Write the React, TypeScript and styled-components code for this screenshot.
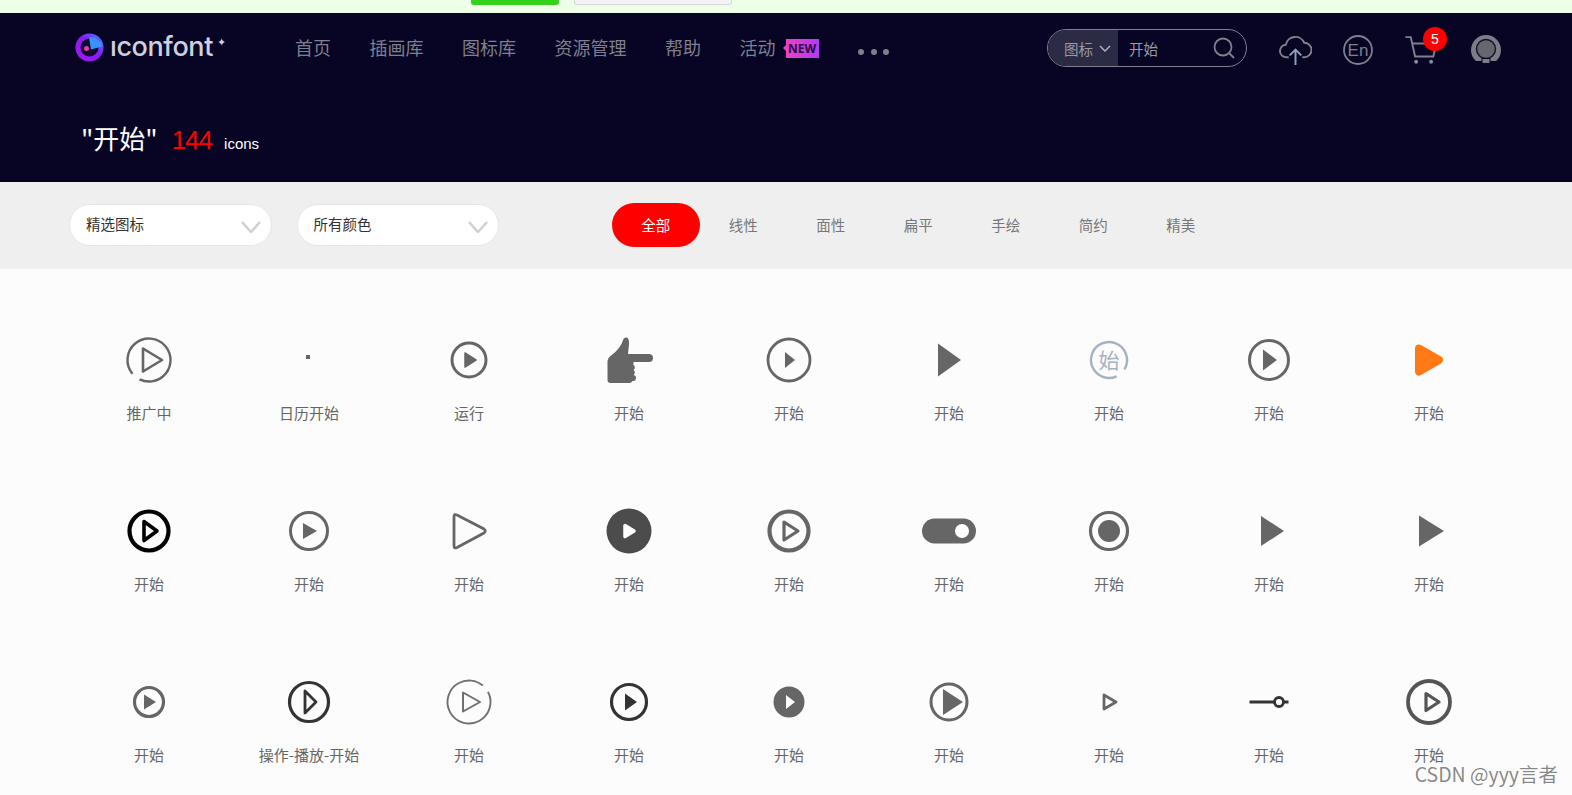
import React from 'react';
import styled, { createGlobalStyle } from 'styled-components';

const GlobalStyle = createGlobalStyle`
  html, body {
    margin: 0;
    padding: 0;
    height: 795px;
    overflow: hidden;
    background: #fcfcfc;
    font-family: "Noto Sans CJK SC", "Liberation Sans", sans-serif;
  }
`;

const Page = styled.div`
  position: relative;
  width: 1572px;
  height: 795px;
  overflow: hidden;
`;

const TopStrip = styled.div`
  height: 13px;
  background: #eeffe8;
  display: flex;
  align-items: flex-start;
  gap: 15px;
  padding-left: 471px;
`;

const GreenStub = styled.div`
  width: 88px;
  height: 5px;
  background: #34d11c;
  border-radius: 0 0 3px 3px;
`;

const GreyStub = styled.div`
  width: 156px;
  height: 4px;
  background: #f3f3f3;
  border: 1px solid #d8d8d8;
  border-top: none;
  border-radius: 0 0 3px 3px;
`;

const Header = styled.header`
  height: 169px;
  background: #080524;
`;

const NavRow = styled.div`
  height: 74px;
  display: flex;
  align-items: center;
  padding-left: 75px;
`;

const LogoBox = styled.div`
  display: flex;
  flex: none;
  align-items: center;
  width: 220px;
  height: 40px;
  margin-top: -6px;
`;

const LogoWord = styled.span`
  font-family: Inter, "Liberation Sans", sans-serif;
  font-size: 27px;
  font-weight: 500;
  line-height: 30px;
  letter-spacing: -0.4px;
  color: #cfcfdf;
  margin-left: 6px;
`;

const LogoStar = styled.span`
  font-size: 11px;
  line-height: 11px;
  color: #cfcfdf;
  margin: -12px 0 0 4px;
`;

const Nav = styled.nav`
  display: flex;
  flex: none;
  align-items: center;
  gap: 38.5px;
  width: 752px;
  margin-top: -6px;
`;

const NavItem = styled.a`
  font-size: 18px;
  line-height: 24px;
  color: #7f7f8d;
  display: flex;
  align-items: center;
`;

const NewBadge = styled.span`
  position: relative;
  width: 33px;
  height: 19px;
  margin: 2px 0 0 10px;
  background: linear-gradient(90deg, #ee3fc4, #b13bf0);
  color: #2a0a4a;
  font: bold 12px/19px "Open Sans", "Liberation Sans", sans-serif;
  text-align: center;

  &::before {
    content: "";
    position: absolute;
    left: -3px;
    top: 6px;
    border: 3px solid transparent;
    border-left: none;
    border-right-color: #ee3fc4;
  }
`;

const Dots = styled.div`
  display: flex;
  gap: 6.5px;
  margin: 9px 0 0 1px;
`;

const Dot = styled.i`
  width: 6px;
  height: 6px;
  border-radius: 50%;
  background: #7f7f8d;
`;

const SearchBox = styled.div`
  flex: none;
  width: 198px;
  height: 36px;
  border: 1px solid #7f7f8d;
  border-radius: 19px;
  display: flex;
  align-items: center;
  overflow: hidden;
  margin-top: -4px;
`;

const SearchType = styled.div`
  width: 70px;
  height: 100%;
  background: #2c2b45;
  color: #9a9aa6;
  font-size: 14.5px;
  display: flex;
  align-items: center;
  gap: 6px;
  padding-left: 16px;
  box-sizing: border-box;
`;

const SearchText = styled.span`
  flex: 1;
  color: #9a9aa6;
  font-size: 14.5px;
  padding-left: 11px;
`;

const SearchIcon = styled.svg`
  margin-right: 11px;
`;

const Tools = styled.div`
  display: flex;
  align-items: center;
  margin-left: 32px;
  position: relative;
`;

const ToolIcon = styled.svg<{ $gap: number }>`
  display: block;
  flex: none;
  margin-right: ${(p) => p.$gap}px;
`;

const CartBadge = styled.span`
  position: absolute;
  left: 144px;
  top: -8px;
  width: 24px;
  height: 24px;
  border-radius: 50%;
  background: #f00;
  color: #fff;
  font: 14px/24px "Liberation Sans", sans-serif;
  text-align: center;
`;

const TitleRow = styled.div`
  display: flex;
  align-items: baseline;
  padding: 31px 0 0 81px;
  color: #fff;
`;

const TitleWord = styled.span`
  font-size: 26px;
  line-height: 40px;
`;

const TitleCount = styled.span`
  font-family: "Liberation Sans", sans-serif;
  font-size: 26px;
  color: #f00;
  margin-left: 14px;
  letter-spacing: -1px;
`;

const TitleUnit = styled.span`
  font-family: "Liberation Sans", sans-serif;
  font-size: 15px;
  margin-left: 12px;
`;

const FilterBar = styled.div`
  height: 87px;
  background: #efefef;
  display: flex;
  align-items: center;
  padding-left: 69px;
  border-bottom: 1px solid #f3f3f3;
  box-sizing: border-box;
`;

const Select = styled.div`
  width: 202.5px;
  height: 42px;
  box-sizing: border-box;
  border: 1px solid #e6e6e6;
  border-radius: 21px;
  background: #fff;
  color: #333;
  font-size: 14.5px;
  line-height: 37px;
  padding: 0 10px 0 16px;
  margin-right: 25px;
  display: flex;
  justify-content: space-between;
`;

const SelectArrow = styled.svg`
  margin-top: 16px;
`;

const Tabs = styled.div`
  display: flex;
  margin-left: 88px;
`;

const Tab = styled.div<{ $active?: boolean }>`
  width: 87.5px;
  height: 44px;
  border-radius: 22px;
  text-align: center;
  font-size: 14.5px;
  line-height: 44px;
  background: ${(p) => (p.$active ? '#f00' : 'transparent')};
  color: ${(p) => (p.$active ? '#fff' : '#777')};
`;

const IconGrid = styled.main`
  display: grid;
  grid-template-columns: repeat(9, 160px);
  row-gap: 78px;
  padding: 61px 0 0 69px;
`;

const Tile = styled.div`
  display: flex;
  flex-direction: column;
  align-items: center;
`;

const Glyph = styled.svg`
  display: block;
  width: 60px;
  height: 60px;
  overflow: visible;
`;

const TileName = styled.span`
  margin-top: 13px;
  font-size: 15px;
  line-height: 20px;
  color: #666;
  white-space: nowrap;
`;

const Watermark = styled.div`
  position: absolute;
  right: 14px;
  bottom: 8px;
  font-size: 19.5px;
  line-height: 26px;
  color: rgba(90, 90, 90, 0.72);
`;

const ring = (r: number, w: number, c = '#666', extra = {}) => (
  <circle cx="30" cy="30" r={r} fill="none" stroke={c} strokeWidth={w} {...extra} />
);

const gapRing = (r: number, w: number, c: string, from: number, gap: number) =>
  ring(r, w, c, {
    pathLength: 360,
    strokeDasharray: `${360 - gap} ${gap}`,
    transform: `rotate(${from} 30 30)`,
  });

// triangle pointing right; x1..x2 in local units, half height h
const tri = (x1: number, x2: number, h: number, c = '#666') => (
  <polygon points={`${x1},${30 - h} ${x2},30 ${x1},${30 + h}`} fill={c} />
);

const triLine = (x1: number, x2: number, h: number, w: number, c = '#666') => (
  <polygon
    points={`${x1},${30 - h} ${x2},30 ${x1},${30 + h}`}
    fill="none"
    stroke={c}
    strokeWidth={w}
    strokeLinejoin="round"
  />
);

const triRound = (x1: number, x2: number, h: number, w: number, c = '#666') => (
  <polygon
    points={`${x1},${30 - h} ${x2},30 ${x1},${30 + h}`}
    fill={c}
    stroke={c}
    strokeWidth={w}
    strokeLinejoin="round"
  />
);

const icons: { name: string; art: React.ReactNode }[] = [
  { name: '推广中', art: <>{gapRing(21.5, 2.4, '#666', 140, 24)}{triLine(24, 43, 11.5, 2.6)}</> },
  { name: '日历开始', art: <rect x="27" y="25" width="4" height="4" fill="#666" /> },
  { name: '运行', art: <>{ring(17, 3)}{triRound(26, 37, 7, 1.5)}</> },
  {
    name: '开始',
    art: (
      <path
        transform="translate(-1.500 0)"
        d="M26 9c3-3 6-1 5.500 5l-1 10h21a4 4 0 0 1 0 8H36v3a3 3 0 0 1 0 5a3 3 0 0 1 0 5a3 3 0 0 1-1 6q-1 2-3 2H13a3 3 0 0 1-3-3V31q0-3 3-5q10-7 13-17z"
        fill="#666"
      />
    ),
  },
  { name: '开始', art: <>{ring(21, 2.8)}{tri(26, 36, 8)}</> },
  { name: '开始', art: tri(19, 42, 16.5) },
  {
    name: '开始',
    art: (
      <>
        {gapRing(18, 2.4, '#a6b1c1', 65, 34)}
        <text x="30" y="38" textAnchor="middle" fontSize="21" fill="#a6b1c1" fontFamily='"Noto Sans CJK SC", sans-serif'>
          始
        </text>
      </>
    ),
  },
  { name: '开始', art: <>{ring(19.5, 3)}{tri(24, 38, 10.5)}</> },
  { name: '开始', art: triRound(20, 40, 11.5, 8, '#ff7a14') },
  { name: '开始', art: <>{ring(19.5, 4.2, '#000')}{triLine(25, 38, 9.5, 3.6, '#000')}</> },
  { name: '开始', art: <>{ring(18.5, 3)}{tri(24, 38, 8)}</> },
  {
    name: '开始',
    art: (
      <path
        d="M15 16q0-3.500 3-2L45 28q2.500 2 0 4L18 46.500q-3 1.500-3-2z"
        fill="none"
        stroke="#666"
        strokeWidth="2.800"
      />
    ),
  },
  { name: '开始', art: <>{ring(22.5, 0, '#4c4c4c', { fill: '#4c4c4c' })}{triRound(26, 35, 5.5, 3.5, '#fff')}</> },
  { name: '开始', art: <>{ring(19.5, 4.2)}{triLine(25, 39, 9, 3.2)}</> },
  {
    name: '开始',
    art: (
      <>
        <rect x="3" y="17.500" width="54" height="25" rx="12.500" fill="#666" />
        <circle cx="43" cy="30" r="7" fill="#fff" />
      </>
    ),
  },
  { name: '开始', art: <>{ring(18.5, 3.2)}<circle cx="30" cy="30" r="11" fill="#666" /></> },
  { name: '开始', art: tri(22, 45, 15) },
  { name: '开始', art: tri(20, 45, 15.5) },
  { name: '开始', art: <>{ring(14.5, 3.2)}{tri(25, 37, 7.5)}</> },
  { name: '操作-播放-开始', art: <>{ring(19.5, 3.2, '#333')}{triLine(26, 37, 11, 2.8, '#333')}</> },
  { name: '开始', art: <>{gapRing(21.5, 1.9, '#707070', -28, 22)}{triLine(24, 41, 9.5, 2, '#707070')}</> },
  { name: '开始', art: <>{ring(17.5, 3.2, '#333')}{tri(26, 38, 8.5, '#333')}</> },
  { name: '开始', art: <>{ring(15.5, 0, '#666', { fill: '#666' })}{tri(27, 36, 7, '#fff')}</> },
  { name: '开始', art: <>{ring(18, 3)}{tri(24, 44, 13)}</> },
  { name: '开始', art: triLine(25, 37, 7, 2.8) },
  {
    name: '开始',
    art: (
      <>
        <rect x="10.500" y="28.500" width="39" height="3" fill="#333" />
        <circle cx="40" cy="30" r="4.500" fill="#fff" stroke="#333" strokeWidth="2.800" />
      </>
    ),
  },
  { name: '开始', art: <>{ring(21, 3.8, '#555')}{triLine(27, 40, 8.5, 3.2, '#555')}</> },
];

const Chevron = () => (
  <SelectArrow width="20" height="12" viewBox="0 0 20 12">
    <path d="M1 1l9 10 9-10" fill="none" stroke="#d0d0d0" strokeWidth="2.400" />
  </SelectArrow>
);

const Logo = () => (
  <svg width="29" height="29" viewBox="0 0 29 29">
    <defs>
      <linearGradient id="logoRing" x1="1" y1="0" x2="0" y2="1">
        <stop offset="0" stopColor="#2f8cff" />
        <stop offset="0.45" stopColor="#8a1cf5" />
        <stop offset="1" stopColor="#a516ee" />
      </linearGradient>
    </defs>
    <circle cx="14.500" cy="14.500" r="14" fill="url(#logoRing)" />
    <circle cx="14.500" cy="14.500" r="9" fill="#0d0a2c" />
    <path d="M14 4.500h6l6 5 1 4-11 3z" fill="#3a92ff" />
    <circle cx="11.500" cy="15.500" r="2.500" fill="#e83fa5" />
  </svg>
);

const Upload = () => (
  <ToolIcon $gap={31} width="33" height="31" viewBox="0 0 34 32" fill="none" stroke="#7f7f8d" strokeWidth="2">
    <path d="M10 23H8a6.500 6.500 0 0 1-1-13a10 10 0 0 1 19-2a7.500 7.500 0 0 1 0 15h-2" />
    <path d="M17 31V15m-6 6l6-6 6 6" stroke="#8fa0b5" />
  </ToolIcon>
);

const EnCircle = () => (
  <ToolIcon $gap={31} width="30" height="30" viewBox="0 0 30 30" fill="none">
    <circle cx="15" cy="15" r="14" stroke="#7f7f8d" strokeWidth="1.800" />
    <text x="15" y="21" textAnchor="middle" fontSize="17" fill="#7f7f8d" fontFamily='"Liberation Sans", sans-serif'>
      En
    </text>
  </ToolIcon>
);

const Cart = () => (
  <ToolIcon $gap={32} width="35" height="30" viewBox="0 0 32 28" fill="none" stroke="#7f7f8d" strokeWidth="1.800">
    <path d="M1 2h5l4 18h17l3-12H8" />
    <circle cx="11" cy="25" r="1.800" fill="#7f8fa5" stroke="none" />
    <circle cx="25" cy="25" r="1.800" fill="#7f8fa5" stroke="none" />
  </ToolIcon>
);

const Avatar = () => (
  <ToolIcon $gap={0} width="30" height="30" viewBox="0 0 30 30">
    <circle cx="15" cy="15" r="15" fill="#7d7d88" />
    <circle cx="15" cy="14" r="9.500" fill="#66666f" stroke="#12112e" strokeWidth="1.400" />
    <rect x="0" y="26" width="30" height="4" fill="#080524" />
    <rect x="11" y="23.500" width="8" height="5" fill="#7d7d88" stroke="#080524" />
  </ToolIcon>
);

const tabs = ['全部', '线性', '面性', '扁平', '手绘', '简约', '精美'];

export default function App() {
  return (
    <Page>
      <GlobalStyle />
      <TopStrip>
        <GreenStub />
        <GreyStub />
      </TopStrip>
      <Header>
        <NavRow>
          <LogoBox>
            <Logo />
            <LogoWord>ıconfont</LogoWord>
            <LogoStar>✦</LogoStar>
          </LogoBox>
          <Nav>
            <NavItem>首页</NavItem>
            <NavItem>插画库</NavItem>
            <NavItem>图标库</NavItem>
            <NavItem>资源管理</NavItem>
            <NavItem>帮助</NavItem>
            <NavItem>
              活动
              <NewBadge>NEW</NewBadge>
            </NavItem>
            <Dots>
              <Dot />
              <Dot />
              <Dot />
            </Dots>
          </Nav>
          <SearchBox>
            <SearchType>
              图标
              <svg width="12" height="7" viewBox="0 0 12 7">
                <path d="M1 1l5 5 5-5" fill="none" stroke="#b5b5c0" strokeWidth="1.400" />
              </svg>
            </SearchType>
            <SearchText>开始</SearchText>
            <SearchIcon width="22" height="22" viewBox="0 0 22 22" fill="none" stroke="#7f7f8d" strokeWidth="1.800">
              <circle cx="10" cy="10" r="8.500" />
              <path d="M16 16l5 5" />
            </SearchIcon>
          </SearchBox>
          <Tools>
            <Upload />
            <EnCircle />
            <Cart />
            <Avatar />
            <CartBadge>5</CartBadge>
          </Tools>
        </NavRow>
        <TitleRow>
          <TitleWord>"开始"</TitleWord>
          <TitleCount>144</TitleCount>
          <TitleUnit>icons</TitleUnit>
        </TitleRow>
      </Header>
      <FilterBar>
        <Select>
          精选图标
          <Chevron />
        </Select>
        <Select>
          所有颜色
          <Chevron />
        </Select>
        <Tabs>
          {tabs.map((t, i) => (
            <Tab key={t} $active={i === 0}>
              {t}
            </Tab>
          ))}
        </Tabs>
      </FilterBar>
      <IconGrid>
        {icons.map((icon, i) => (
          <Tile key={i}>
            <Glyph viewBox="0 0 60 60">{icon.art}</Glyph>
            <TileName>{icon.name}</TileName>
          </Tile>
        ))}
      </IconGrid>
      <Watermark>CSDN @yyy言者</Watermark>
    </Page>
  );
}
